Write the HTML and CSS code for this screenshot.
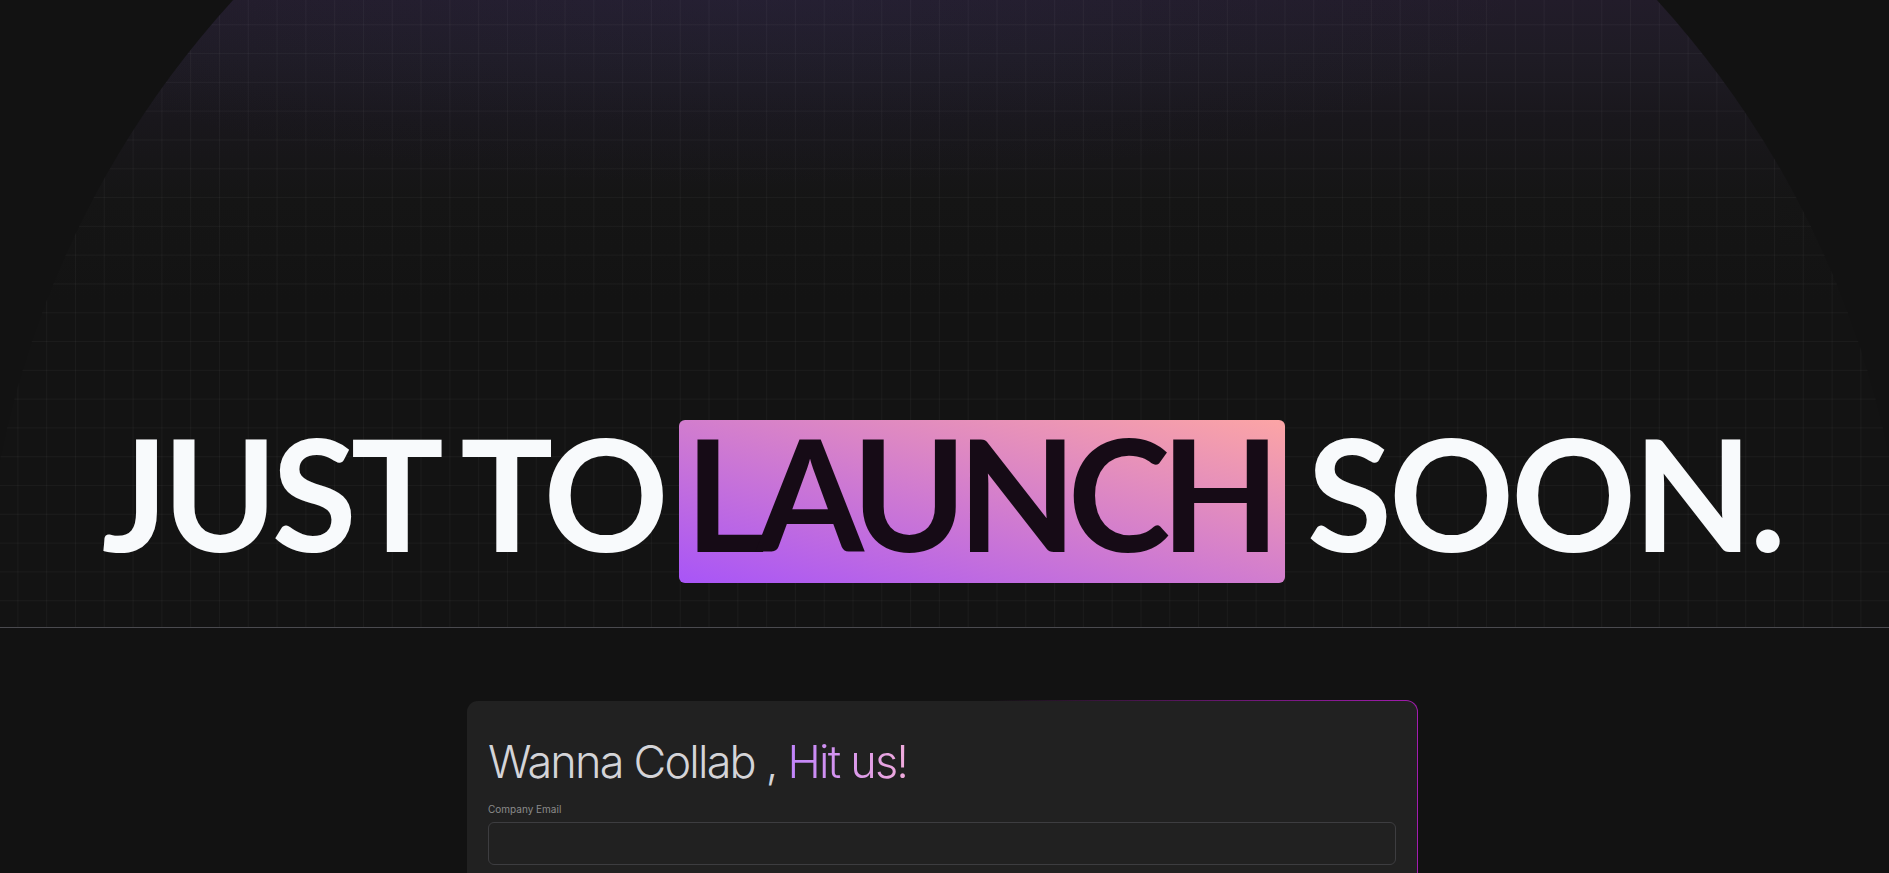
FILE: index.html
```html
<!DOCTYPE html>
<html lang="en">
<head>
<meta charset="utf-8">
<title>Just to launch soon</title>
<link rel="stylesheet" href="styles.css">
</head>
<body>
<section class="hero">
  <div class="globe"></div>
  <h1 class="headline">
    <span class="word word-first">JUST TO</span>
    <span class="highlight">LAUNCH</span>
    <span class="word">SOON.</span>
  </h1>
</section>
<section class="contact">
  <form class="card">
    <h2 class="card-title">Wanna Collab , <span class="accent">Hit us!</span></h2>
    <label class="field">
      <span class="label">Company Email</span>
      <input class="input" type="email">
    </label>
  </form>
</section>
</body>
</html>
```

FILE: styles.css
```css
* { box-sizing: border-box; }

html, body {
  margin: 0;
  background: #121212;
}

body {
  font-family: "Inter", "Liberation Sans", sans-serif;
  overflow: hidden;
}

.hero {
  position: relative;
  height: 628px;
  overflow: hidden;
  border-bottom: 1px solid #4a4a4f;
  display: flex;
  justify-content: center;
  align-items: flex-start;
  padding: 420px 4px 0 0;
}

.globe {
  position: absolute;
  left: calc(50% - 964px);
  top: -314px;
  width: 1928px;
  height: 1928px;
  border-radius: 50%;
  background-image:
    linear-gradient(to right, rgba(255, 255, 255, 0.035) 1px, transparent 1px),
    linear-gradient(to bottom, rgba(255, 255, 255, 0.035) 1px, transparent 1px),
    radial-gradient(ellipse 40% 10% at 40% 16%, rgba(70, 70, 140, 0.09), transparent 100%),
    linear-gradient(to bottom, #231d2c 0px, #221c2a 314px, #1e1b24 374px, #19171c 434px, #151515 514px, #131313 614px);
  background-size: 28.8px 28.8px, 28.8px 28.8px, 100% 100%, 100% 100%;
  background-position: 7.6px 21.5px, 7.6px 21.5px, 0 0, 0 0;
  background-repeat: repeat, repeat, no-repeat, no-repeat;
}

.headline {
  position: relative;
  margin: 0;
  display: flex;
  align-items: baseline;
  font-family: "Lato", "Inter", sans-serif;
  font-weight: 700;
  font-size: 155px;
  line-height: 0.9;
  letter-spacing: -0.02em;
  color: #f8fafc;
  white-space: nowrap;
}

.word-first {
  letter-spacing: -0.038em;
}

.highlight {
  display: inline-block;
  margin: 0 22px 0 16px;
  padding: 3px 14px 20px 6px;
  border-radius: 6px;
  background: linear-gradient(to top right, #a855f7, #fca5a5);
  color: #160b16;
  letter-spacing: -0.06em;
}

.contact {
  display: flex;
  justify-content: center;
  padding: 72px 5px 0 0;
}

.card {
  width: 952px;
  margin: 0;
  padding: 34px 21px 60px;
  border: 1px solid transparent;
  border-radius: 12px;
  background:
    linear-gradient(#212121, #212121) padding-box,
    linear-gradient(to right, rgba(162, 28, 175, 0) 55%, rgba(162, 28, 175, 0.6) 80%, #a21caf 100%) border-box;
}

.card-title {
  margin: 0;
  font-size: 45px;
  line-height: 54px;
  font-weight: 300;
  letter-spacing: -0.04em;
  color: #d4d4d8;
}

.accent {
  background: linear-gradient(to right, #c084fc, #f0abdc);
  -webkit-background-clip: text;
  background-clip: text;
  color: transparent;
}

.field {
  display: flex;
  flex-direction: column;
  gap: 6px;
  margin-top: 13px;
}

.label {
  font-size: 10px;
  line-height: 14px;
  color: #8b8b8b;
}

.input {
  width: 100%;
  height: 43px;
  border: 1px solid #3d3d40;
  border-radius: 6px;
  background: transparent;
  color: #e5e5e5;
  font: inherit;
  padding: 0 12px;
}
```
